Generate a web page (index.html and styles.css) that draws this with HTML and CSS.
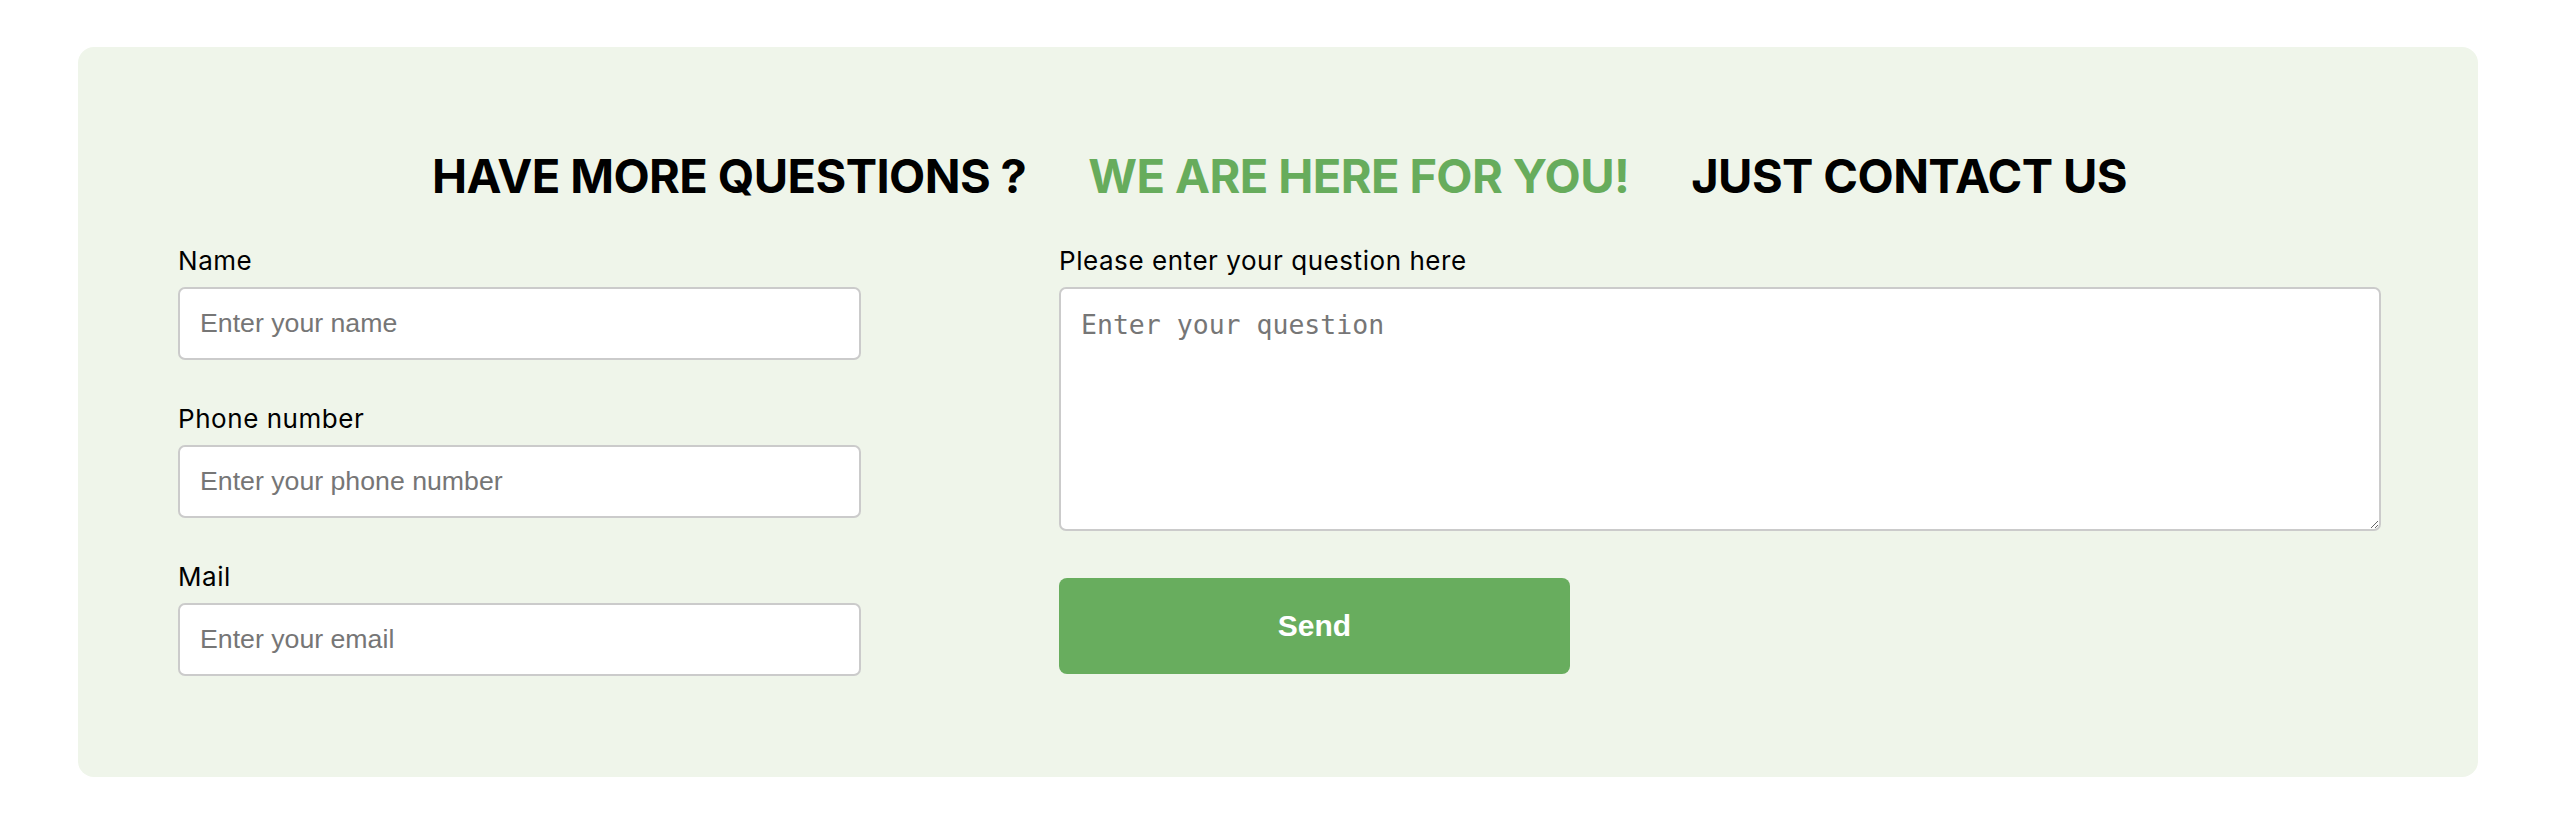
FILE: index.html
```html
<!DOCTYPE html>
<html lang="en">
<head>
<meta charset="utf-8">
<title>Contact us</title>
<link rel="stylesheet" href="styles.css">
</head>
<body>
<div class="page">
  <section class="card">
    <h2 class="headline">
      <span class="dark">HAVE MORE QUESTIONS ?</span>
      <span class="green">WE ARE HERE FOR YOU!</span>
      <span class="dark">JUST CONTACT US</span>
    </h2>
    <form class="form">
      <div class="col-left">
        <div class="field">
          <label class="label" for="name">Name</label>
          <input class="input" id="name" type="text" placeholder="Enter your name">
        </div>
        <div class="field">
          <label class="label" for="phone">Phone number</label>
          <input class="input" id="phone" type="text" placeholder="Enter your phone number">
        </div>
        <div class="field">
          <label class="label" for="mail">Mail</label>
          <input class="input" id="mail" type="email" placeholder="Enter your email">
        </div>
      </div>
      <div class="col-right">
        <label class="label" for="question">Please enter your question here</label>
        <textarea class="textarea" id="question" placeholder="Enter your question"></textarea>
        <button class="send" type="button">Send</button>
      </div>
    </form>
  </section>
</div>
</body>
</html>
```
FILE: styles.css
```css
html, body {
  margin: 0;
  padding: 0;
  background: #ffffff;
}

.page {
  padding: 47px 0 47px 78px;
}

.card {
  width: 2400px;
  box-sizing: border-box;
  padding: 100px 97px 101px 100px;
  background: #eff5ea;
  border-radius: 16px;
}

.headline {
  margin: 0 0 40px 0;
  display: flex;
  justify-content: center;
  gap: 62px;
  font-family: Inter, "Noto Sans", sans-serif;
  font-weight: 700;
  font-size: 47px;
  line-height: 58px;
  letter-spacing: -0.6px;
}

.dark {
  color: #000000;
}

.green {
  color: #67ac5c;
}

.form {
  display: grid;
  grid-template-columns: 683px 1fr;
  column-gap: 198px;
  margin: 0;
}

.col-left {
  display: flex;
  flex-direction: column;
  gap: 43px;
}

.field {
  display: flex;
  flex-direction: column;
}

.col-right {
  display: flex;
  flex-direction: column;
  align-items: flex-start;
}

.label {
  display: block;
  font-family: Inter, "Noto Sans", sans-serif;
  font-size: 26px;
  line-height: 31px;
  letter-spacing: 0.55px;
  color: #000000;
  margin-bottom: 11px;
}

.input {
  box-sizing: border-box;
  width: 100%;
  height: 73px;
  margin: 0;
  padding: 0 20px;
  border: 2px solid #cbcbcb;
  border-radius: 7px;
  background: #ffffff;
  font-family: "Liberation Sans", Arial, sans-serif;
  font-size: 26.7px;
  color: #222;
  outline: none;
}

.input::placeholder {
  color: #767676;
}

.textarea {
  box-sizing: border-box;
  display: block;
  width: 100%;
  height: 244px;
  margin: 0;
  padding: 20px;
  border: 2px solid #cbcbcb;
  border-radius: 7px;
  background: #ffffff;
  font-family: "DejaVu Sans Mono", "Liberation Mono", monospace;
  font-size: 26.5px;
  color: #222;
  outline: none;
}

.textarea::placeholder {
  color: #767676;
}

.send {
  margin-top: 47px;
  width: 511px;
  height: 96px;
  border: none;
  border-radius: 8px;
  background: #68ad5e;
  color: #ffffff;
  font-family: "Liberation Sans", Arial, sans-serif;
  font-weight: 700;
  font-size: 30px;
  cursor: pointer;
}
```
